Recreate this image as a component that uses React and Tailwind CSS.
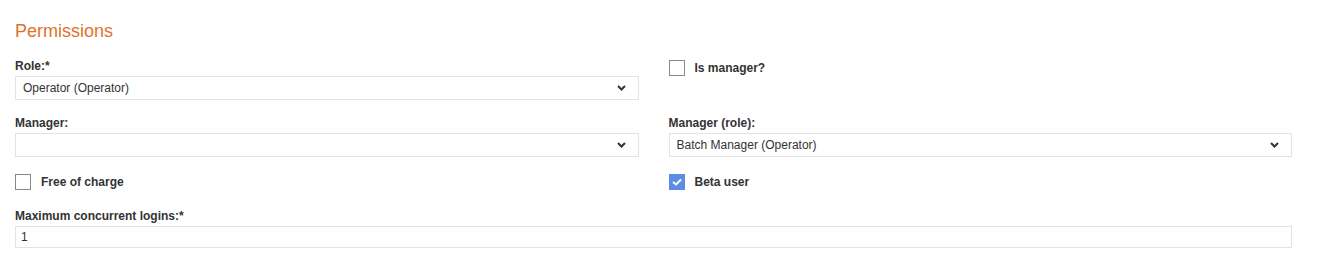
import React from "react";

const Chevron = () => (
  <svg width="9" height="6" viewBox="0 0 9 6" className="shrink-0">
    <polyline points="1,1 4.5,4.5 8,1" fill="none" stroke="#333" strokeWidth="2" />
  </svg>
);

function Label({ children }) {
  return <div className="text-[12px] leading-[14px] font-bold text-[#333] mb-[3px]">{children}</div>;
}

function Select({ value }) {
  return (
    <div className="h-[24px] border border-[#e3e3e3] bg-white flex items-center justify-between pl-[7px] pr-[12px] text-[12px] text-[#333]">
      <span>{value}</span>
      <Chevron />
    </div>
  );
}

function Check({ checked, label }) {
  return (
    <div className="flex items-center h-[16px]">
      {checked ? (
        <span className="w-[16px] h-[16px] bg-[#5b8de6] flex items-center justify-center">
          <svg width="10" height="8" viewBox="0 0 10 8">
            <polyline points="1,4 4,6.5 9,1.5" fill="none" stroke="#fff" strokeWidth="2" />
          </svg>
        </span>
      ) : (
        <span className="w-[16px] h-[16px] border border-[#7f8c8d] bg-white" />
      )}
      <span className="ml-[10px] text-[12px] font-bold text-[#333]">{label}</span>
    </div>
  );
}

export default function App() {
  return (
    <div className="min-h-[259px] bg-white font-['Liberation_Sans',Arial,sans-serif]">
      <div className="pl-[15px] w-[1292px] pt-[20px]">
        <h2 className="text-[18px] leading-[22px] text-[#e2712f]">Permissions</h2>

        <div className="grid grid-cols-2 gap-x-[30px] mt-[17px]">
          <div>
            <Label>Role:*</Label>
            <Select value="Operator (Operator)" />
          </div>
          <div className="pt-[1px]">
            <Check label="Is manager?" />
          </div>

          <div className="mt-[16px]">
            <Label>Manager:</Label>
            <Select value="" />
          </div>
          <div className="mt-[16px]">
            <Label>Manager (role):</Label>
            <Select value="Batch Manager (Operator)" />
          </div>

          <div className="mt-[17px]">
            <Check label="Free of charge" />
          </div>
          <div className="mt-[17px]">
            <Check checked label="Beta user" />
          </div>
        </div>

        <div className="mt-[19px]">
          <Label>Maximum concurrent logins:*</Label>
          <div className="h-[22px] border border-[#e3e3e3] flex items-center pl-[5px] text-[12px] text-[#333]">1</div>
        </div>
      </div>
    </div>
  );
}
